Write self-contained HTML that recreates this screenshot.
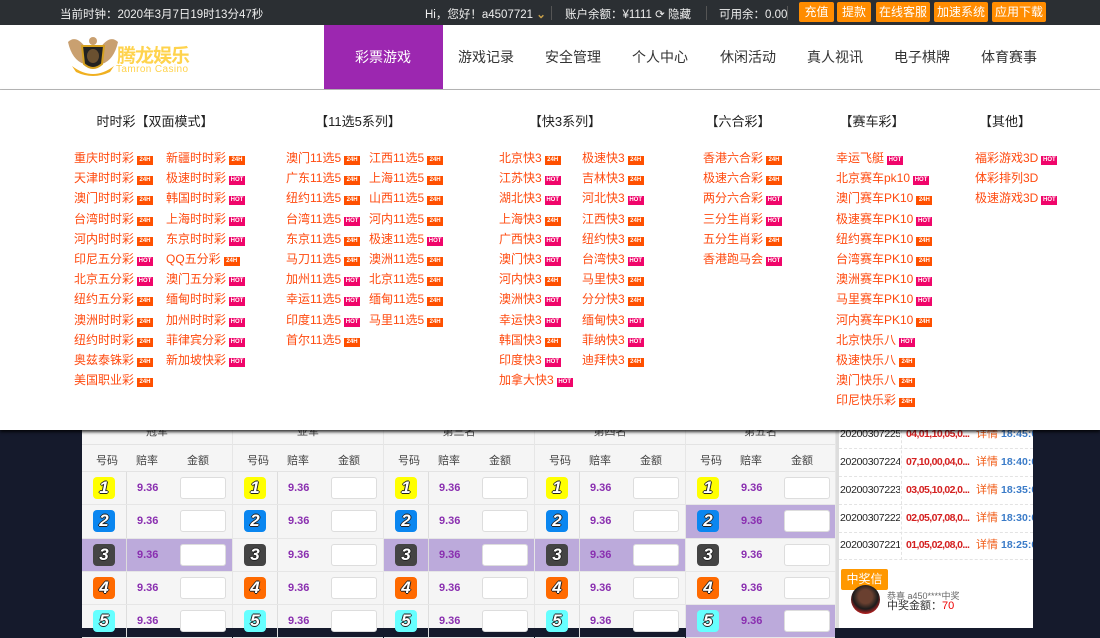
<!DOCTYPE html>
<html><head><meta charset="utf-8"><style>
*{margin:0;padding:0;box-sizing:border-box}
body{width:1100px;height:628px;overflow:hidden;position:relative;background:#151a2c;font-family:"Liberation Sans","Noto Sans CJK SC",sans-serif;font-size:12px}
.abs{position:absolute}
#top{left:0;top:0;width:1100px;height:25px;background:#2b2f33;color:#eee}
#top span{position:absolute;top:6px;font-size:11.5px;white-space:nowrap}
.btn{position:absolute;top:2px;height:20px;background:#ff8c00;color:#fff;font-size:12px;line-height:20px;text-align:center;border-radius:2px}
.sep{position:absolute;top:6px;width:1px;height:14px;background:#555}
#hdr{left:0;top:25px;width:1100px;height:65px;background:#fff;border-bottom:1px solid #bbb}
.nav{position:absolute;top:22px;font-size:14px;color:#333;transform:translateX(-50%);white-space:nowrap}
#menu{left:0;top:90px;width:1100px;height:340px;background:#fff;box-shadow:0 2px 3px rgba(0,0,0,.8);z-index:5}
.h{position:absolute;top:21px;font-size:13px;color:#222;transform:translateX(-50%);white-space:nowrap}
.col{position:absolute;top:60px}
.col div{height:20.2px;line-height:16px;color:#ff4a0f;font-size:12px;white-space:nowrap}
.b{display:inline-block;width:16px;height:9px;font-size:6px;line-height:9px;color:#fff;text-align:center;vertical-align:1px;margin-left:3px;font-weight:bold;font-style:normal}
.o{background:#ff5000}.p{background:#f0056a}
#tbl{left:82px;top:430px;width:754px;height:198px;background:#f5f5f5}
.g{position:absolute;top:0;width:151px;height:198px;border-right:1px solid #e6e6e6}
.gt{height:15px;border-bottom:1px solid #e3e3e3;text-align:center;font-size:11px;color:#444;line-height:4px}
.sh{height:27px;border-bottom:1px solid #e3e3e3;position:relative;color:#444;font-size:11px}
.sh span{position:absolute;top:7px}
.r{height:33.3px;border-bottom:1px solid #e6e6e6;position:relative}
.r.hl{background:#bcaadb}
.r .nc{position:absolute;left:0;top:0;width:45px;height:100%;border-right:1px solid #ddd}
.ball{position:absolute;left:11px;top:5px;width:22px;height:22px;border-radius:4px;color:#fff;font-weight:bold;font-style:italic;font-size:17px;line-height:22px;text-align:center;text-shadow:-1px 0 #222,1px 0 #222,0 -1px #222,0 1px #222}
.od{position:absolute;left:55px;top:10px;color:#8a2fb0;font-size:11px;font-weight:bold}
.in{position:absolute;left:98px;top:5px;width:46px;height:22px;background:#fff;border:1px solid #ddd;border-radius:3px}
#rp{left:836px;top:425px;width:197px;height:203px;background:#fff;border-left:3px solid #ddd;overflow:hidden}
.rr{position:absolute;left:0;width:194px;height:28px;border-bottom:1px dashed #e3e3e3;font-size:10.5px;white-space:nowrap}
.rr span{position:absolute;top:0;height:27px;line-height:27px;overflow:hidden}
.rr .d{left:1px;width:60px;color:#222;letter-spacing:-0.3px}
.rr .n{left:67px;width:68px;color:#d42020;font-weight:bold;letter-spacing:-0.6px}
.rr .x{left:137px;color:#f05a14;font-size:11px}
.rr .t{left:162px;color:#3a7bc8;font-weight:bold}
</style></head><body>
<div id="top" class="abs">
<span style="left:60px">当前时钟：2020年3月7日19时13分47秒</span>
<span style="left:425px">Hi，您好！a4507721 <b style="color:#c9a04a">⌄</b></span>
<div class="sep" style="left:551px"></div>
<span style="left:565px">账户余额：¥1111 ⟳ 隐藏</span>
<div class="sep" style="left:706px"></div>
<span style="left:719px">可用余：0.00</span>
<div class="sep" style="left:787px"></div>
<div class="btn" style="left:799px;width:35px">充值</div>
<div class="btn" style="left:837px;width:34px">提款</div>
<div class="btn" style="left:876px;width:54px">在线客服</div>
<div class="btn" style="left:934px;width:54px">加速系统</div>
<div class="btn" style="left:992px;width:54px">应用下载</div>
</div>
<div id="hdr" class="abs">
<svg class="abs" style="left:66px;top:9px" width="54" height="46"><path d="M2 8 Q10 0 20 14 L18 30 Q6 26 2 8Z M52 8 Q44 0 34 14 L36 30 Q48 26 52 8Z" fill="#c9a070"/><path d="M16 12 L38 12 L36 30 Q27 38 18 30Z" fill="#222" stroke="#d4a020" stroke-width="2"/><ellipse cx="27" cy="22" rx="6" ry="7" fill="#6a5030"/><path d="M6 32 Q27 48 48 32 L44 38 Q27 46 10 38Z" fill="#f0b020"/><circle cx="27" cy="7" r="4" fill="#c9a070"/></svg>
<div class="abs" style="left:117px;top:16px;color:#ffd34d;font-size:19px;font-weight:bold;letter-spacing:-1px">腾龙娱乐</div>
<div class="abs" style="left:116px;top:39px;color:#ffd34d;font-size:10px;letter-spacing:0.4px">Tamron Casino</div>
<div class="abs" style="left:324px;top:0;width:119px;height:64px;background:#9c27b0"></div>
<div class="nav" style="left:383px;color:#fff">彩票游戏</div>
<div class="nav" style="left:486px">游戏记录</div>
<div class="nav" style="left:573px">安全管理</div>
<div class="nav" style="left:660px">个人中心</div>
<div class="nav" style="left:748px">休闲活动</div>
<div class="nav" style="left:835px">真人视讯</div>
<div class="nav" style="left:922px">电子棋牌</div>
<div class="nav" style="left:1009px">体育赛事</div>
</div>
<div id="menu" class="abs">
<div class="h" style="left:155px">时时彩【双面模式】</div>
<div class="h" style="left:358px">【11选5系列】</div>
<div class="h" style="left:565px">【快3系列】</div>
<div class="h" style="left:738px">【六合彩】</div>
<div class="h" style="left:872px">【赛车彩】</div>
<div class="h" style="left:1005px">【其他】</div>
<div class="col" style="left:74px">
<div>重庆时时彩<i class="b o">24H</i></div><div>天津时时彩<i class="b o">24H</i></div><div>澳门时时彩<i class="b o">24H</i></div><div>台湾时时彩<i class="b o">24H</i></div><div>河内时时彩<i class="b o">24H</i></div><div>印尼五分彩<i class="b p">HOT</i></div><div>北京五分彩<i class="b p">HOT</i></div><div>纽约五分彩<i class="b o">24H</i></div><div>澳洲时时彩<i class="b o">24H</i></div><div>纽约时时彩<i class="b o">24H</i></div><div>奥兹泰铢彩<i class="b o">24H</i></div><div>美国职业彩<i class="b o">24H</i></div></div>
<div class="col" style="left:166px">
<div>新疆时时彩<i class="b o">24H</i></div><div>极速时时彩<i class="b p">HOT</i></div><div>韩国时时彩<i class="b p">HOT</i></div><div>上海时时彩<i class="b p">HOT</i></div><div>东京时时彩<i class="b p">HOT</i></div><div>QQ五分彩<i class="b o">24H</i></div><div>澳门五分彩<i class="b p">HOT</i></div><div>缅甸时时彩<i class="b p">HOT</i></div><div>加州时时彩<i class="b p">HOT</i></div><div>菲律宾分彩<i class="b p">HOT</i></div><div>新加坡快彩<i class="b p">HOT</i></div></div>
<div class="col" style="left:286px">
<div>澳门11选5<i class="b o">24H</i></div><div>广东11选5<i class="b o">24H</i></div><div>纽约11选5<i class="b o">24H</i></div><div>台湾11选5<i class="b p">HOT</i></div><div>东京11选5<i class="b o">24H</i></div><div>马刀11选5<i class="b o">24H</i></div><div>加州11选5<i class="b p">HOT</i></div><div>幸运11选5<i class="b p">HOT</i></div><div>印度11选5<i class="b p">HOT</i></div><div>首尔11选5<i class="b o">24H</i></div></div>
<div class="col" style="left:369px">
<div>江西11选5<i class="b o">24H</i></div><div>上海11选5<i class="b o">24H</i></div><div>山西11选5<i class="b o">24H</i></div><div>河内11选5<i class="b o">24H</i></div><div>极速11选5<i class="b p">HOT</i></div><div>澳洲11选5<i class="b o">24H</i></div><div>北京11选5<i class="b o">24H</i></div><div>缅甸11选5<i class="b o">24H</i></div><div>马里11选5<i class="b o">24H</i></div></div>
<div class="col" style="left:499px">
<div>北京快3<i class="b o">24H</i></div><div>江苏快3<i class="b p">HOT</i></div><div>湖北快3<i class="b p">HOT</i></div><div>上海快3<i class="b o">24H</i></div><div>广西快3<i class="b p">HOT</i></div><div>澳门快3<i class="b p">HOT</i></div><div>河内快3<i class="b o">24H</i></div><div>澳洲快3<i class="b p">HOT</i></div><div>幸运快3<i class="b p">HOT</i></div><div>韩国快3<i class="b o">24H</i></div><div>印度快3<i class="b p">HOT</i></div><div>加拿大快3<i class="b p">HOT</i></div></div>
<div class="col" style="left:582px">
<div>极速快3<i class="b o">24H</i></div><div>吉林快3<i class="b o">24H</i></div><div>河北快3<i class="b p">HOT</i></div><div>江西快3<i class="b o">24H</i></div><div>纽约快3<i class="b o">24H</i></div><div>台湾快3<i class="b p">HOT</i></div><div>马里快3<i class="b o">24H</i></div><div>分分快3<i class="b o">24H</i></div><div>缅甸快3<i class="b p">HOT</i></div><div>菲纳快3<i class="b p">HOT</i></div><div>迪拜快3<i class="b o">24H</i></div></div>
<div class="col" style="left:703px">
<div>香港六合彩<i class="b o">24H</i></div><div>极速六合彩<i class="b o">24H</i></div><div>两分六合彩<i class="b p">HOT</i></div><div>三分生肖彩<i class="b p">HOT</i></div><div>五分生肖彩<i class="b o">24H</i></div><div>香港跑马会<i class="b p">HOT</i></div></div>
<div class="col" style="left:836px">
<div>幸运飞艇<i class="b p">HOT</i></div><div>北京赛车pk10<i class="b p">HOT</i></div><div>澳门赛车PK10<i class="b o">24H</i></div><div>极速赛车PK10<i class="b p">HOT</i></div><div>纽约赛车PK10<i class="b o">24H</i></div><div>台湾赛车PK10<i class="b o">24H</i></div><div>澳洲赛车PK10<i class="b p">HOT</i></div><div>马里赛车PK10<i class="b p">HOT</i></div><div>河内赛车PK10<i class="b o">24H</i></div><div>北京快乐八<i class="b p">HOT</i></div><div>极速快乐八<i class="b o">24H</i></div><div>澳门快乐八<i class="b o">24H</i></div><div>印尼快乐彩<i class="b o">24H</i></div></div>
<div class="col" style="left:975px">
<div>福彩游戏3D<i class="b p">HOT</i></div><div>体彩排列3D</div><div>极速游戏3D<i class="b p">HOT</i></div></div>
</div>
<div id="tbl" class="abs">
<div class="g" style="left:0"><div class="gt">冠军</div><div class="sh"><span style="left:14px">号码</span><span style="left:54px">赔率</span><span style="left:105px">金额</span></div>
<div class="r"><div class="nc"><div class="ball" style="background:#ff0">1</div></div><span class="od">9.36</span><div class="in"></div></div>
<div class="r"><div class="nc"><div class="ball" style="background:#0a86f0">2</div></div><span class="od">9.36</span><div class="in"></div></div>
<div class="r hl"><div class="nc"><div class="ball" style="background:#444">3</div></div><span class="od">9.36</span><div class="in"></div></div>
<div class="r"><div class="nc"><div class="ball" style="background:#ff6a00">4</div></div><span class="od">9.36</span><div class="in"></div></div>
<div class="r"><div class="nc"><div class="ball" style="background:#6ff">5</div></div><span class="od">9.36</span><div class="in"></div></div></div>
<div class="g" style="left:151px"><div class="gt">亚军</div><div class="sh"><span style="left:14px">号码</span><span style="left:54px">赔率</span><span style="left:105px">金额</span></div>
<div class="r"><div class="nc"><div class="ball" style="background:#ff0">1</div></div><span class="od">9.36</span><div class="in"></div></div>
<div class="r"><div class="nc"><div class="ball" style="background:#0a86f0">2</div></div><span class="od">9.36</span><div class="in"></div></div>
<div class="r"><div class="nc"><div class="ball" style="background:#444">3</div></div><span class="od">9.36</span><div class="in"></div></div>
<div class="r"><div class="nc"><div class="ball" style="background:#ff6a00">4</div></div><span class="od">9.36</span><div class="in"></div></div>
<div class="r"><div class="nc"><div class="ball" style="background:#6ff">5</div></div><span class="od">9.36</span><div class="in"></div></div></div>
<div class="g" style="left:302px"><div class="gt">第三名</div><div class="sh"><span style="left:14px">号码</span><span style="left:54px">赔率</span><span style="left:105px">金额</span></div>
<div class="r"><div class="nc"><div class="ball" style="background:#ff0">1</div></div><span class="od">9.36</span><div class="in"></div></div>
<div class="r"><div class="nc"><div class="ball" style="background:#0a86f0">2</div></div><span class="od">9.36</span><div class="in"></div></div>
<div class="r hl"><div class="nc"><div class="ball" style="background:#444">3</div></div><span class="od">9.36</span><div class="in"></div></div>
<div class="r"><div class="nc"><div class="ball" style="background:#ff6a00">4</div></div><span class="od">9.36</span><div class="in"></div></div>
<div class="r"><div class="nc"><div class="ball" style="background:#6ff">5</div></div><span class="od">9.36</span><div class="in"></div></div></div>
<div class="g" style="left:453px"><div class="gt">第四名</div><div class="sh"><span style="left:14px">号码</span><span style="left:54px">赔率</span><span style="left:105px">金额</span></div>
<div class="r"><div class="nc"><div class="ball" style="background:#ff0">1</div></div><span class="od">9.36</span><div class="in"></div></div>
<div class="r"><div class="nc"><div class="ball" style="background:#0a86f0">2</div></div><span class="od">9.36</span><div class="in"></div></div>
<div class="r hl"><div class="nc"><div class="ball" style="background:#444">3</div></div><span class="od">9.36</span><div class="in"></div></div>
<div class="r"><div class="nc"><div class="ball" style="background:#ff6a00">4</div></div><span class="od">9.36</span><div class="in"></div></div>
<div class="r"><div class="nc"><div class="ball" style="background:#6ff">5</div></div><span class="od">9.36</span><div class="in"></div></div></div>
<div class="g" style="left:604px;width:150px"><div class="gt">第五名</div><div class="sh"><span style="left:14px">号码</span><span style="left:54px">赔率</span><span style="left:105px">金额</span></div>
<div class="r"><div class="nc" style="border:0"><div class="ball" style="background:#ff0">1</div></div><span class="od">9.36</span><div class="in"></div></div>
<div class="r hl"><div class="nc" style="border:0"><div class="ball" style="background:#0a86f0">2</div></div><span class="od">9.36</span><div class="in"></div></div>
<div class="r"><div class="nc" style="border:0"><div class="ball" style="background:#444">3</div></div><span class="od">9.36</span><div class="in"></div></div>
<div class="r"><div class="nc" style="border:0"><div class="ball" style="background:#ff6a00">4</div></div><span class="od">9.36</span><div class="in"></div></div>
<div class="r hl"><div class="nc" style="border:0"><div class="ball" style="background:#6ff">5</div></div><span class="od">9.36</span><div class="in"></div></div></div>
</div>
<div id="rp" class="abs">
<div class="abs" style="left:62px;top:0;width:0;height:135px;border-left:1px dashed #e3e3e3"></div>
<div class="rr" style="top:-4px"><span class="d">20200307225</span><span class="n">04,01,10,05,0...</span><span class="x">详情</span><span class="t">18:45:0</span></div>
<div class="rr" style="top:24px"><span class="d">20200307224</span><span class="n">07,10,00,04,0...</span><span class="x">详情</span><span class="t">18:40:0</span></div>
<div class="rr" style="top:52px"><span class="d">20200307223</span><span class="n">03,05,10,02,0...</span><span class="x">详情</span><span class="t">18:35:0</span></div>
<div class="rr" style="top:80px"><span class="d">20200307222</span><span class="n">02,05,07,08,0...</span><span class="x">详情</span><span class="t">18:30:0</span></div>
<div class="rr" style="top:107px"><span class="d">20200307221</span><span class="n">01,05,02,08,0...</span><span class="x">详情</span><span class="t">18:25:0</span></div>
<div class="abs" style="left:2px;top:144px;width:47px;height:21px;background:#ff9800;color:#fff;font-size:12px;line-height:21px;text-align:center;border-radius:2px">中奖信息</div>
<div class="abs" style="left:12px;top:160px;width:29px;height:29px;border-radius:50%;background:radial-gradient(circle at 50% 40%,#6a4030 30%,#1c1c1c 55%,#b02020 75%)"></div>
<div class="abs" style="left:48px;top:164px;font-size:9px;color:#666">恭喜 a450****中奖</div>
<div class="abs" style="left:48px;top:172px;font-size:11px;color:#333">中奖金额：<span style="color:#e00">70</span></div>
</div>
</body></html>
